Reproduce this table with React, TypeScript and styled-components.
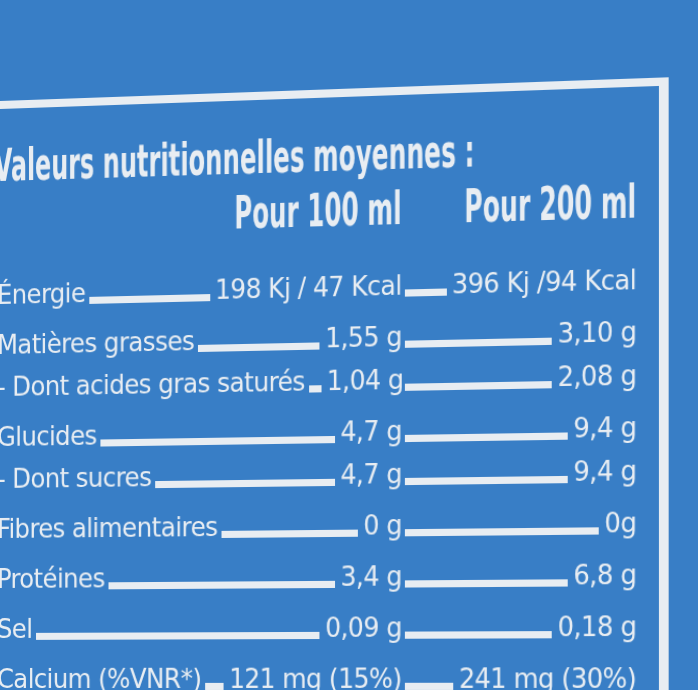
import React from 'react';
import styled, { createGlobalStyle } from 'styled-components';

const GlobalStyle = createGlobalStyle`
  html, body {
    margin: 0;
    padding: 0;
    overflow: hidden;
    background: #387ec6;
  }
`;

type Nutrient = {
  label: string;
  per100: string;
  per200: string;
  sub?: boolean;
};

const nutrients: Nutrient[] = [
  { label: 'Énergie', per100: '198 Kj / 47 Kcal', per200: '396 Kj /94 Kcal' },
  { label: 'Matières grasses', per100: '1,55 g', per200: '3,10 g' },
  { label: '- Dont acides gras saturés', per100: '1,04 g', per200: '2,08 g', sub: true },
  { label: 'Glucides', per100: '4,7 g', per200: '9,4 g' },
  { label: '- Dont sucres', per100: '4,7 g', per200: '9,4 g', sub: true },
  { label: 'Fibres alimentaires', per100: '0 g', per200: '0g' },
  { label: 'Protéines', per100: '3,4 g', per200: '6,8 g' },
  { label: 'Sel', per100: '0,09 g', per200: '0,18 g' },
  { label: 'Calcium (%VNR*)', per100: '121 mg (15%)', per200: '241 mg (30%)' },
];

export default function App() {
  return (
    <>
      <GlobalStyle />
      <Page>
        <Sheet>
          <Box>
            <Title>Valeurs nutritionnelles moyennes :</Title>
            <HeadRow>
              <HeadCell>
                <HeadText>Pour 100 ml</HeadText>
              </HeadCell>
              <HeadCell>
                <HeadText>Pour 200 ml</HeadText>
              </HeadCell>
            </HeadRow>
            {nutrients.map((item) => (
              <Row key={item.label} $sub={item.sub}>
                <Cell>
                  <Label>{item.label}</Label>
                  <Leader $start={4} />
                  <Value>{item.per100}</Value>
                </Cell>
                <Cell>
                  <Leader $start={3} />
                  <Value>{item.per200}</Value>
                </Cell>
              </Row>
            ))}
          </Box>
        </Sheet>
      </Page>
    </>
  );
}

const ink = '#e8edf2';
const condensed = `'DejaVu Sans Condensed', 'DejaVu Sans', sans-serif`;

const Page = styled.div`
  width: 698px;
  height: 690px;
  overflow: hidden;
  background: #387ec6;
`;

// the label is photographed at a slight angle: right side nearer the lens
const Sheet = styled.div`
  height: 100%;
  transform-origin: 0 590px;
  transform: perspective(1000px) rotateY(-3.44deg);
  filter: blur(0.5px);
`;

const Box = styled.div`
  box-sizing: border-box;
  display: flex;
  flex-direction: column;
  width: 674px;
  height: 700px;
  margin: 101px 0 0 -30px;
  padding: 39px 21px 0 19px;
  border: 8px solid ${ink};
  border-right-width: 9px;
  border-bottom: none;
  color: ${ink};
  font-family: ${condensed};
`;

const Title = styled.div`
  margin-left: -3px;
  font-size: 44px;
  line-height: 36px;
  font-weight: 700;
  white-space: nowrap;
  transform: scaleX(0.6);
  transform-origin: left center;
`;

const HeadRow = styled.div`
  display: grid;
  grid-template-columns: 396px 221px;
  margin: 18px 0 22px;
`;

const HeadCell = styled.div`
  display: flex;
  justify-content: flex-end;
  white-space: nowrap;
`;

const HeadText = styled.span`
  flex: none;
  font-size: 44px;
  line-height: 36px;
  font-weight: 700;
  transform: scaleX(0.6);
  transform-origin: right center;
`;

const Row = styled.div<{ $sub?: boolean }>`
  display: grid;
  grid-template-columns: 396px 221px;
  margin-top: ${(p) => (p.$sub ? 12 : 20)}px;
`;

const Cell = styled.div`
  display: flex;
  align-items: baseline;
  font-size: 27px;
  line-height: 30px;
  letter-spacing: -0.6px;
  white-space: nowrap;
`;

const Label = styled.span``;

const Leader = styled.span<{ $start: number }>`
  flex: 1;
  min-width: 12px;
  height: 7px;
  margin: 0 5px 0 ${(p) => p.$start}px;
  background: ${ink};
  transform: translateY(2px);
`;

const Value = styled.span``;
